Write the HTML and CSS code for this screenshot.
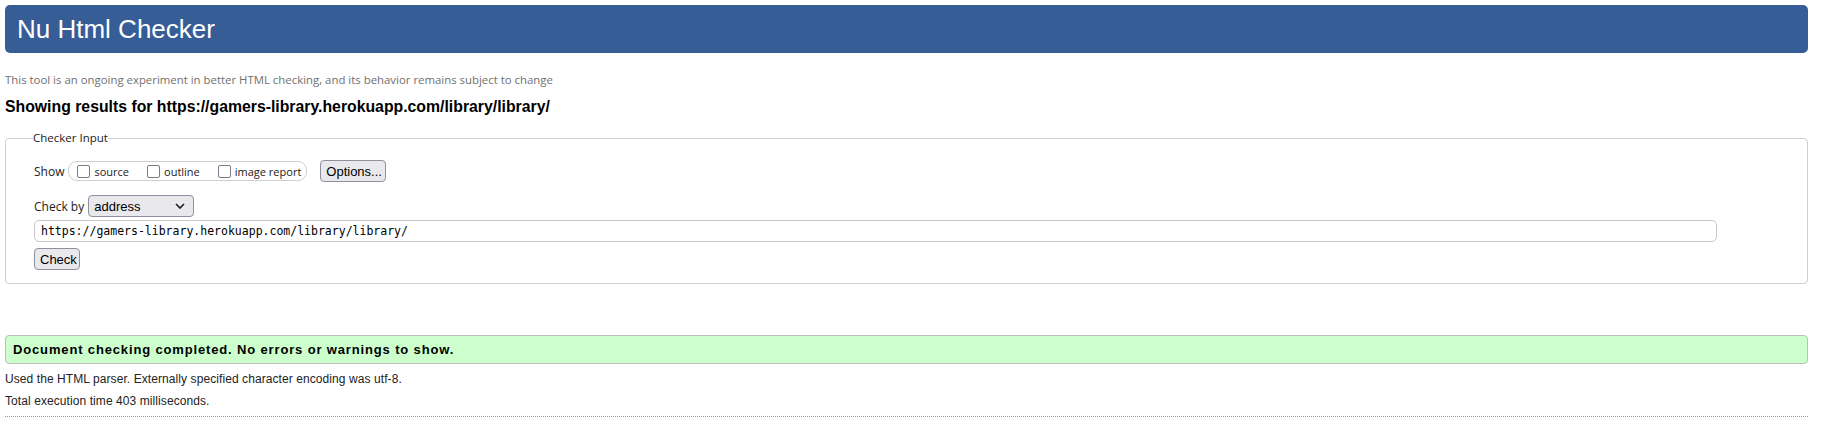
FILE: index.html
```html
<!DOCTYPE html>
<html lang="en">
<head>
<meta charset="utf-8">
<title>Nu Html Checker</title>
<link rel="stylesheet" href="styles.css">
</head>
<body>
<header class="masthead"><h1 class="masthead-title">Nu Html Checker</h1></header>
<p class="tagline">This tool is an ongoing experiment in better HTML checking, and its behavior remains subject to change</p>
<h2 class="results-for">Showing results for https://gamers-library.herokuapp.com/library/library/</h2>
<form class="checker-form">
  <fieldset class="checker">
    <legend class="checker-legend">Checker Input</legend>
    <div class="row row-show">
      <span class="lbl">Show</span>
      <span class="pill">
        <label class="opt"><input type="checkbox" class="cb">source</label>
        <label class="opt"><input type="checkbox" class="cb">outline</label>
        <label class="opt"><input type="checkbox" class="cb">image report</label>
      </span>
      <button type="button" class="btn btn-options">Options...</button>
    </div>
    <div class="row row-by">
      <span class="lbl">Check by</span>
      <span class="select-wrap">
        <select class="sel"><option>address</option></select>
        <svg class="chev" width="10" height="6" viewBox="0 0 10 6"><path d="M1 1 L5 5 L9 1" fill="none" stroke="#1b1b1f" stroke-width="1.6"/></svg>
      </span>
    </div>
    <div class="row row-url">
      <input type="text" class="url" value="https://gamers-library.herokuapp.com/library/library/">
    </div>
    <div class="row row-check">
      <button type="button" class="btn btn-check">Check</button>
    </div>
  </fieldset>
</form>
<div class="success">Document checking completed. No errors or warnings to show.</div>
<p class="details">Used the HTML parser. Externally specified character encoding was utf-8.</p>
<p class="details">Total execution time 403 milliseconds.</p>
<hr class="dotted">
</body>
</html>
```
FILE: styles.css
```css
html, body {
  background: #fff;
}
body {
  margin: 5px 18px 0 5px;
  font-family: "Liberation Sans", Arial, sans-serif;
  color: #000;
}
.masthead {
  height: 48px;
  background: #365d95;
  border-radius: 5px;
  display: flex;
  align-items: center;
  padding-left: 12px;
}
.masthead-title {
  margin: 0;
  font-family: "Liberation Sans", Arial, sans-serif;
  font-weight: normal;
  font-size: 26px;
  color: #fff;
  line-height: 30px;
}
.tagline {
  margin: 19px 0 0 0;
  font-family: "Open Sans", "Noto Sans", sans-serif;
  font-size: 11.4px;
  line-height: 16px;
  color: #707070;
}
.results-for {
  margin: 10px 0 0 0;
  font-size: 15.8px;
  line-height: 18px;
  font-weight: bold;
}
.checker-form {
  margin: 14px 0 0 0;
}
.checker {
  margin: 0;
  border: 1px solid #cfcfcf;
  border-radius: 4px;
  padding: 14px 90px 13px 28px;
  min-width: 0;
}
.checker-legend {
  padding: 0;
  margin-left: -1px;
  font-family: "Open Sans", "Noto Sans", sans-serif;
  font-size: 11.5px;
  line-height: 16px;
  color: #222;
}
.row {
  display: flex;
  align-items: center;
}
.row-show { height: 22px; }
.row-by { margin-top: 13px; height: 22px; }
.row-url { margin-top: 3px; }
.row-check { margin-top: 6px; }
.lbl {
  font-family: "Open Sans", "Noto Sans", sans-serif;
  font-size: 12px;
  color: #222;
  margin-right: 4px;
}
.pill {
  display: inline-flex;
  align-items: center;
  height: 18px;
  border: 1px solid #cfcfcf;
  border-radius: 9px;
  padding: 0 5px 0 8px;
}
.opt {
  display: inline-flex;
  align-items: center;
  font-family: "Open Sans", "Noto Sans", sans-serif;
  font-size: 11px;
  color: #222;
  margin-right: 18px;
}
.opt:last-child { margin-right: 0; }
.cb {
  appearance: none;
  -webkit-appearance: none;
  width: 13px;
  height: 13px;
  margin: 0 4px 0 0;
  border: 1.5px solid #7a7a88;
  border-radius: 2px;
  background: #fff;
}
.btn {
  height: 22px;
  padding: 0 5px;
  font-family: "Liberation Sans", Arial, sans-serif;
  font-size: 13px;
  color: #000;
  background: #e9e9ed;
  border: 1px solid #8f8f9d;
  border-radius: 4px;
}
.btn-options {
  margin-left: 13px;
  width: 66px;
}
.btn-check {
  width: 46px;
}
.select-wrap {
  position: relative;
  display: inline-block;
  height: 22px;
}
.sel {
  appearance: none;
  -webkit-appearance: none;
  width: 106px;
  height: 22px;
  padding: 0 0 0 5px;
  font-family: "Liberation Sans", Arial, sans-serif;
  font-size: 13px;
  color: #000;
  background: #e9e9ed;
  border: 1px solid #8f8f9d;
  border-radius: 4px;
}
.chev {
  position: absolute;
  right: 9px;
  top: 8px;
  pointer-events: none;
}
.url {
  width: 100%;
  height: 22px;
  box-sizing: border-box;
  padding: 0 6px;
  font-family: "DejaVu Sans Mono", "Liberation Mono", monospace;
  font-size: 11.5px;
  color: #000;
  background: #fff;
  border: 1px solid #c8c8c8;
  border-radius: 5px;
}
.success {
  margin-top: 51px;
  height: 27px;
  line-height: 27px;
  padding-left: 7px;
  background: #ccffcc;
  border: 1px solid #bdbdbd;
  border-radius: 4px;
  font-size: 13px;
  font-weight: bold;
  letter-spacing: 0.85px;
}
.details {
  margin: 0;
  font-size: 12px;
  letter-spacing: 0.08px;
  line-height: 22px;
  color: #222;
}
.success + .details { margin-top: 4px; }
.dotted {
  margin: 4px 0 0 0;
  border: 0;
  border-top: 1px dotted #999;
  height: 0;
}
```
